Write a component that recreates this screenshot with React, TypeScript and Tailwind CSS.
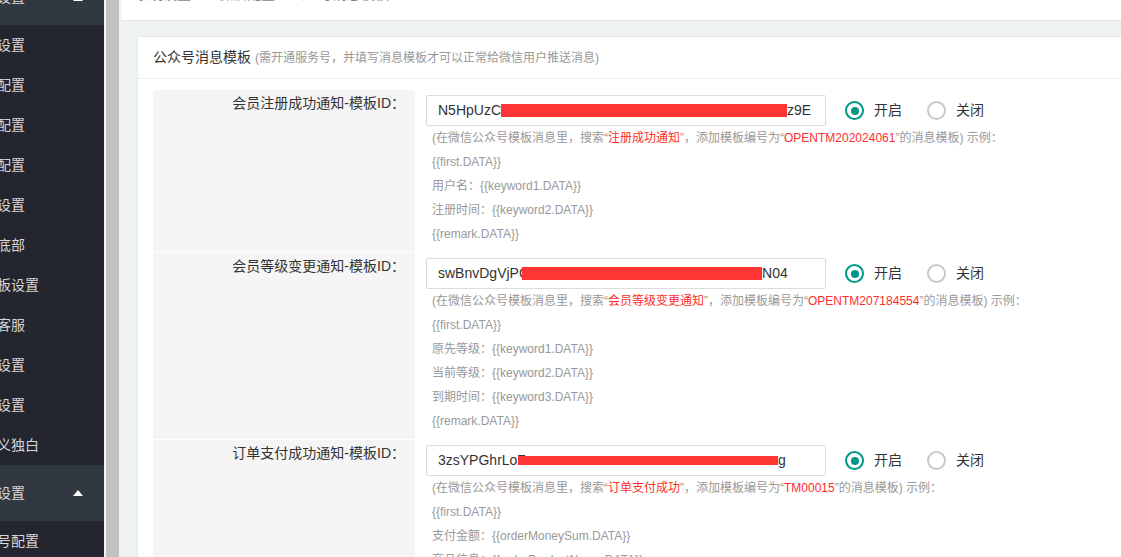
const menuItems = [
  "基本设置",
  "支付配置",
  "短信配置",
  "邮件配置",
  "积分设置",
  "网站底部",
  "主模板设置",
  "在线客服",
  "会员设置",
  "分销设置",
  "自定义独白",
];

type Part = { text: string; red?: boolean };

type TemplateRow = {
  label: string;
  before: string;
  bar: number;
  barOverlap: number;
  barHeight: number;
  after: string;
  hint: Part[];
  sample: string[];
};

const rows: TemplateRow[] = [
  {
    label: "会员注册成功通知-模板ID：",
    before: "N5HpUzC",
    bar: 286,
    barOverlap: 0,
    barHeight: 13,
    after: "z9E",
    hint: [
      { text: "(在微信公众号模板消息里，搜索“" },
      { text: "注册成功通知", red: true },
      { text: "”，添加模板编号为“" },
      { text: "OPENTM202024061", red: true },
      { text: "”的消息模板) 示例：" },
    ],
    sample: ["{{first.DATA}}", "用户名：{{keyword1.DATA}}", "注册时间：{{keyword2.DATA}}", "{{remark.DATA}}"],
  },
  {
    label: "会员等级变更通知-模板ID：",
    before: "swBnvDgVjPC",
    bar: 240,
    barOverlap: 7,
    barHeight: 13,
    after: "N04",
    hint: [
      { text: "(在微信公众号模板消息里，搜索“" },
      { text: "会员等级变更通知", red: true },
      { text: "”，添加模板编号为“" },
      { text: "OPENTM207184554", red: true },
      { text: "”的消息模板) 示例：" },
    ],
    sample: [
      "{{first.DATA}}",
      "原先等级：{{keyword1.DATA}}",
      "当前等级：{{keyword2.DATA}}",
      "到期时间：{{keyword3.DATA}}",
      "{{remark.DATA}}",
    ],
  },
  {
    label: "订单支付成功通知-模板ID：",
    before: "3zsYPGhrLoZ",
    bar: 260,
    barOverlap: 8,
    barHeight: 9,
    after: "g",
    hint: [
      { text: "(在微信公众号模板消息里，搜索“" },
      { text: "订单支付成功", red: true },
      { text: "”，添加模板编号为“" },
      { text: "TM00015", red: true },
      { text: "”的消息模板) 示例：" },
    ],
    sample: [
      "{{first.DATA}}",
      "支付金额：{{orderMoneySum.DATA}}",
      "商品信息：{{orderProductName.DATA}}",
      "{{remark.DATA}}",
    ],
  },
];

const Caret = () => (
  <span className="ml-auto mr-[21px] w-0 h-0 border-x-[5px] border-b-[6px] border-x-transparent border-b-white" />
);

const Sidebar = () => (
  <div className="w-[104px] h-full shrink-0 bg-[#23262e] overflow-hidden">
    <div className="flex flex-col mt-[-30px] text-[14px] text-[#d5d6d8]">
      <div className="h-[55px] bg-[#323841] flex items-center">
        <span className="ml-[-31px] whitespace-nowrap">系统设置</span>
        <Caret />
      </div>
      {menuItems.map((item) => (
        <div key={item} className="h-[40px] flex items-center">
          <span className="ml-[-31px] whitespace-nowrap">{item}</span>
        </div>
      ))}
      <div className="h-[56px] bg-[#323841] flex items-center">
        <span className="ml-[-31px] whitespace-nowrap">微信设置</span>
        <Caret />
      </div>
      <div className="h-[40px] flex items-center">
        <span className="ml-[-31px] whitespace-nowrap">公众号配置</span>
      </div>
    </div>
  </div>
);

const Radio = ({ label, checked }: { label: string; checked?: boolean }) => (
  <div className="flex items-center">
    <span
      className={
        checked
          ? "w-[19px] h-[19px] rounded-full border-2 border-[#009688] flex items-center justify-center"
          : "w-[19px] h-[19px] rounded-full border-2 border-[#c9c9c9]"
      }
    >
      {checked && <span className="w-[8px] h-[8px] rounded-full bg-[#009688]" />}
    </span>
    <span className="ml-[10px] text-[14px] text-[#333]">{label}</span>
  </div>
);

const Row = ({ row }: { row: TemplateRow }) => (
  <div className="flex border-b border-white">
    <div className="w-[262px] shrink-0 bg-[#f5f5f5] text-right pr-[10px] pt-[3px] text-[14px] leading-[20px] text-[#333]">
      {row.label}
    </div>
    <div className="pl-[11px] pt-[5px] pb-[6px]">
      <div className="flex items-center">
        <div className="w-[400px] h-[31px] border border-[#dcdcdc] rounded-[2px] flex items-center pl-[11px] text-[14px] text-[#333] whitespace-nowrap overflow-hidden">
          <span>{row.before}</span>
          <span
            className="inline-block bg-[#ff3535]"
            style={{ width: row.bar, height: row.barHeight, marginLeft: -row.barOverlap }}
          />
          <span>{row.after}</span>
        </div>
        <div className="flex items-center gap-[25px] ml-[19px]">
          <Radio label="开启" checked />
          <Radio label="关闭" />
        </div>
      </div>
      <div className="pl-[6px] text-[12px] leading-[24px] text-[#999] whitespace-nowrap">
        <div>
          {row.hint.map((p, i) => (
            <span key={i} className={p.red ? "text-[#ff2d2d]" : ""}>
              {p.text}
            </span>
          ))}
        </div>
        {row.sample.map((s) => (
          <div key={s}>{s}</div>
        ))}
      </div>
    </div>
  </div>
);

export default function App() {
  return (
    <div className="h-[557px] w-[1121px] flex overflow-hidden font-['Liberation_Sans','Noto_Sans_CJK_SC',sans-serif]">
      <Sidebar />
      <div className="w-[2px] shrink-0 bg-[#f2f2f2]" />
      <div className="w-[13px] shrink-0 bg-[#c1c1c1]" />

      <div className="flex-1 bg-[#eff2f3] overflow-hidden flex flex-col">
        {/* breadcrumb, scrolled mostly out of view */}
        <div className="h-[21px] shrink-0 ml-[2px] bg-white border-b border-[#e4e6e8] overflow-hidden">
          <div className="mt-[-16px] pl-[14px] flex text-[14px] leading-[20px] text-[#888] whitespace-nowrap">
            <span>系统设置</span>
            <span className="ml-[28px]">微信配置</span>
            <span className="ml-[16px]">公众号消息模板</span>
          </div>
        </div>

        <div className="pl-[18px] pt-[15px]">
          <div className="w-[1050px] bg-white border border-[#e6e6e6]">
            <div className="h-[42px] border-b border-[#eeeeee] px-[15px] flex items-center whitespace-nowrap">
              <span className="text-[14px] text-[#333]">公众号消息模板</span>
              <span className="ml-[4px] text-[12px] text-[#999]">
                (需开通服务号，并填写消息模板才可以正常给微信用户推送消息)
              </span>
            </div>
            <div className="pt-[11px] px-[15px] pb-[15px]">
              {rows.map((r) => (
                <Row key={r.label} row={r} />
              ))}
            </div>
          </div>
        </div>
      </div>
    </div>
  );
}
